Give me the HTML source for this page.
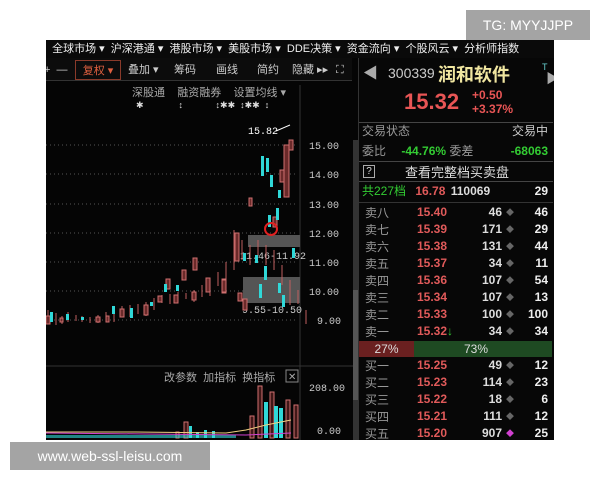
<!DOCTYPE html>
<html><head><meta charset="utf-8"><style>
*{margin:0;padding:0;box-sizing:border-box}
body{width:600px;height:480px;background:#fff;position:relative;overflow:hidden;font-family:"Liberation Sans","Noto Sans CJK SC",sans-serif}
.a{position:absolute;white-space:nowrap}
#scr{position:absolute;left:46px;top:40px;width:508px;height:400px;background:#050505;overflow:hidden}
.nav{left:0;top:0;width:508px;height:18px;background:#0a0a0a;color:#eee;font-size:11px;line-height:18px}
.tb{color:#ccc;font-size:11px;line-height:20px;height:20px;top:20px}
.r{font-size:12px;line-height:17px;height:17px}
.lab{color:#999;left:6px;font-family:"Noto Sans CJK SC",sans-serif}
.pr{color:#e05a5a;left:58px;font-weight:bold}
.q1{color:#ddd;right:52px;font-weight:bold;text-align:right}
.dot{color:#666;right:40px;font-size:8px}
.q2{color:#eee;right:6px;font-weight:bold}
</style></head><body>
<div class="a" style="left:466px;top:10px;width:124px;height:30px;background:#a4a4a4;color:#fff;font-size:14px;line-height:30px;text-align:center">TG: MYYJJPP</div>
<div id="scr">
<div class="a nav">&nbsp;&nbsp;全球市场 ▾ &nbsp;沪深港通 ▾ &nbsp;港股市场 ▾ &nbsp;美股市场 ▾ &nbsp;DDE决策 ▾ &nbsp;资金流向 ▾ &nbsp;个股风云 ▾ &nbsp;分析师指数</div>
<div class="a" style="left:0;top:18px;width:306px;height:23px;background:#0c0c0c;border-bottom:1px solid #333"></div>
<div class="a tb" style="left:-2px">+ &nbsp;—</div>
<div class="a tb" style="left:29px;top:20px;width:46px;border:1px solid #8a3a2a;color:#e06040;text-align:center">复权 ▾</div>
<div class="a tb" style="left:82px">叠加 ▾</div>
<div class="a tb" style="left:128px">筹码</div>
<div class="a tb" style="left:170px">画线</div>
<div class="a tb" style="left:211px">简约</div>
<div class="a tb" style="left:246px">隐藏 ▸▸</div>
<div class="a tb" style="left:290px">⛶</div>
<div class="a" style="left:86px;top:44px;color:#aaa;font-size:11px">深股通 &nbsp;&nbsp; 融资融券 &nbsp;&nbsp; 设置均线 ▾</div>
<div class="a" style="left:90px;top:60px;color:#ddd;font-size:9px">✱ &nbsp;&nbsp;&nbsp;&nbsp;&nbsp;&nbsp;&nbsp;&nbsp;&nbsp;&nbsp;&nbsp;&nbsp;&nbsp;↕ &nbsp;&nbsp;&nbsp;&nbsp;&nbsp;&nbsp;&nbsp;&nbsp;&nbsp;&nbsp;&nbsp;&nbsp;↕✱✱ &nbsp;↕✱✱ &nbsp;↕</div>
<svg class="a" style="left:0;top:0" width="312" height="400">
<g stroke="#555" stroke-dasharray="1 3">
<line x1="0" y1="105" x2="252" y2="105"/><line x1="0" y1="134" x2="252" y2="134"/><line x1="0" y1="164" x2="252" y2="164"/><line x1="0" y1="193" x2="252" y2="193"/><line x1="0" y1="222" x2="252" y2="222"/><line x1="0" y1="251" x2="252" y2="251"/><line x1="0" y1="280" x2="252" y2="280"/>
</g>
<line x1="254" y1="45" x2="254" y2="400" stroke="#333"/>
<line x1="0" y1="326" x2="312" y2="326" stroke="#333"/>
<rect x="202" y="195" width="52" height="12" fill="#555"/>
<rect x="197" y="237" width="57" height="26" fill="#555"/>
<text x="202" y="94" fill="#fff" font-size="10" font-family="Liberation Mono">15.82</text>
<line x1="230" y1="91" x2="244" y2="85" stroke="#fff"/>
<text x="194" y="219" fill="#ccc" font-size="10" font-family="Liberation Mono">11.46-11.92</text>
<text x="196" y="273" fill="#ccc" font-size="10" font-family="Liberation Mono">9.55-10.50</text>
<g fill="none" stroke-width="1">
<path d="M2 270v14M10 273v12M16 276v8M22 272v10M30 275v6M36 276v6M44 277v6M52 275v8M60 272v10M68 268v14M76 266v10M84 265v12M92 264v10M100 262v14M108 258v12M116 255v8M124 254v10M132 252v8M140 253v6M148 250v12M156 245v12M164 240v16M172 232v14M180 222v20M188 190v40M196 200v20M204 205v20M212 200v16M220 205v20M228 210v20M236 225v20M244 240v25M252 250v14M260 270v14" stroke="#c06060"/>
</g>
<g fill="#6a2a2a" stroke="#d07070">
<rect x="0" y="276" width="4" height="8"/><rect x="14" y="278" width="3" height="4"/><rect x="50" y="277" width="4" height="5"/><rect x="60" y="276" width="3" height="6"/><rect x="74" y="269" width="4" height="8"/><rect x="98" y="265" width="4" height="10"/><rect x="112" y="256" width="4" height="6"/><rect x="128" y="255" width="4" height="8"/><rect x="146" y="252" width="4" height="8"/><rect x="160" y="238" width="4" height="14"/><rect x="176" y="239" width="4" height="14"/><rect x="189" y="193" width="4" height="28"/><rect x="192" y="253" width="4" height="8"/><rect x="197" y="259" width="4" height="11"/><rect x="227" y="177" width="4" height="10"/><rect x="234" y="130" width="4" height="12"/><rect x="238" y="105" width="5" height="52"/><rect x="243" y="100" width="4" height="10"/><rect x="203" y="158" width="3" height="8"/><rect x="176" y="240" width="4" height="12"/><rect x="136" y="230" width="4" height="10"/><rect x="120" y="239" width="4" height="10"/><rect x="147" y="218" width="4" height="12"/>
</g>
<g fill="#30d8d8">
<rect x="4" y="272" width="3" height="10"/><rect x="20" y="274" width="3" height="6"/><rect x="35" y="277" width="3" height="3"/><rect x="66" y="266" width="3" height="8"/><rect x="84" y="268" width="3" height="10"/><rect x="104" y="262" width="3" height="4"/><rect x="118" y="244" width="3" height="8"/><rect x="130" y="245" width="3" height="6"/><rect x="197" y="213" width="3" height="8"/><rect x="209" y="215" width="3" height="8"/><rect x="218" y="226" width="3" height="14"/><rect x="213" y="244" width="3" height="14"/><rect x="232" y="243" width="3" height="10"/><rect x="232" y="150" width="3" height="8"/><rect x="236" y="255" width="3" height="12"/><rect x="215" y="116" width="3" height="20"/><rect x="220" y="118" width="3" height="14"/><rect x="224" y="135" width="3" height="12"/><rect x="230" y="168" width="3" height="12"/><rect x="222" y="175" width="3" height="12"/><rect x="246" y="208" width="3" height="10"/>
</g>
<circle cx="225" cy="189" r="6" fill="none" stroke="#e02020" stroke-width="2"/>
<text x="118" y="341" fill="#aaa" font-size="11">改参数 &#160;加指标 &#160;换指标</text>
<rect x="240" y="330" width="12" height="12" fill="none" stroke="#888"/>
<text x="242" y="340" fill="#aaa" font-size="10">✕</text>
<g fill="#401818" stroke="#d07070">
<rect x="212" y="346" width="4" height="52"/><rect x="224" y="352" width="4" height="46"/><rect x="240" y="360" width="4" height="38"/><rect x="248" y="365" width="4" height="33"/><rect x="204" y="376" width="4" height="22"/><rect x="138" y="382" width="4" height="16"/><rect x="130" y="392" width="3" height="6"/>
</g>
<g fill="#30d8d8">
<rect x="143" y="386" width="3" height="12"/><rect x="150" y="392" width="3" height="6"/><rect x="158" y="390" width="3" height="8"/><rect x="166" y="391" width="3" height="7"/><rect x="218" y="362" width="4" height="36"/><rect x="228" y="366" width="4" height="32"/><rect x="233" y="368" width="4" height="30"/><rect x="0" y="395" width="190" height="3" opacity=".6"/>
</g>
<polyline points="0,392 90,392 180,393 200,390 220,385 245,380" fill="none" stroke="#f0d080"/>
<polyline points="0,393 100,394 200,395 245,393" fill="none" stroke="#d040d0"/>
<g fill="#ccc" font-size="10" font-family="Liberation Mono">
<text x="263" y="109">15.00</text><text x="263" y="138">14.00</text><text x="263" y="168">13.00</text><text x="263" y="197">12.00</text><text x="263" y="226">11.00</text><text x="263" y="255">10.00</text><text x="271" y="284">9.00</text><text x="263" y="351">208.00</text><text x="271" y="394">0.00</text>
</g>
<rect x="307" y="100" width="5" height="300" fill="#333"/>
<rect x="307" y="250" width="5" height="110" fill="#555"/>
</svg>
<div class="a" style="left:312px;top:18px;width:196px;height:382px;background:#070707;border-left:1px solid #333"></div>
<div class="a" style="left:317px;top:22px;color:#aaa;font-size:15px">◀</div>
<div class="a" style="left:342px;top:25px;color:#ccc;font-size:14px">300339</div>
<div class="a" style="left:392px;top:21px;color:#f0e6a0;font-size:18px;font-weight:bold;font-family:'Noto Sans CJK SC',sans-serif">润和软件</div>
<div class="a" style="left:496px;top:22px;color:#6cc;font-size:9px">T</div>
<div class="a" style="left:500px;top:28px;color:#aaa;font-size:13px">▶</div>
<div class="a" style="left:358px;top:49px;color:#e85555;font-size:22px;font-weight:bold">15.32</div>
<div class="a" style="left:426px;top:48px;color:#e85555;font-size:12px;font-weight:bold;line-height:14px">+0.50<br>+3.37%</div>
<div class="a" style="left:313px;top:82px;width:194px;height:1px;background:#444"></div>
<div class="a r" style="left:316px;top:83px;color:#999;width:188px">交易状态<span style="position:absolute;right:2px;color:#ccc">交易中</span></div>
<div class="a r" style="left:316px;top:103px;color:#999;width:188px">委比 <span style="color:#3c3;font-weight:bold;margin-left:12px">-44.76%</span> 委差<span style="position:absolute;right:2px;color:#3c3;font-weight:bold">-68063</span></div>
<div class="a" style="left:313px;top:121px;width:194px;height:1px;background:#444"></div>
<div class="a" style="left:317px;top:125px;width:12px;height:13px;border:1px solid #aaa;color:#ddd;font-size:10px;line-height:11px;text-align:center">?</div>
<div class="a" style="left:359px;top:122px;color:#ddd;font-size:13px">查看完整档买卖盘</div>
<div class="a" style="left:313px;top:141px;width:194px;height:1px;background:#444"></div>
<div class="a r" style="left:316px;top:143px;width:188px;color:#3c3">共227档 <span style="color:#e05a5a;font-weight:bold;margin-left:6px">16.78</span> <span style="color:#ddd;font-weight:bold;margin-left:2px">110069</span><span style="position:absolute;right:2px;color:#eee;font-weight:bold">29</span></div>
<div class="a" style="left:313px;top:162px;width:194px;height:1px;background:#333"></div>
<div class="a" style="left:313px;top:164px;width:195px;height:236px">
<div class="a r lab" style="top:0">卖八</div><div class="a r pr" style="top:0">15.40</div><div class="a r q1" style="top:0">46</div><div class="a r dot" style="top:0">◆</div><div class="a r q2" style="top:0">46</div>
<div class="a r lab" style="top:17px">卖七</div><div class="a r pr" style="top:17px">15.39</div><div class="a r q1" style="top:17px">171</div><div class="a r dot" style="top:17px">◆</div><div class="a r q2" style="top:17px">29</div>
<div class="a r lab" style="top:34px">卖六</div><div class="a r pr" style="top:34px">15.38</div><div class="a r q1" style="top:34px">131</div><div class="a r dot" style="top:34px">◆</div><div class="a r q2" style="top:34px">44</div>
<div class="a r lab" style="top:51px">卖五</div><div class="a r pr" style="top:51px">15.37</div><div class="a r q1" style="top:51px">34</div><div class="a r dot" style="top:51px">◆</div><div class="a r q2" style="top:51px">11</div>
<div class="a r lab" style="top:68px">卖四</div><div class="a r pr" style="top:68px">15.36</div><div class="a r q1" style="top:68px">107</div><div class="a r dot" style="top:68px">◆</div><div class="a r q2" style="top:68px">54</div>
<div class="a r lab" style="top:85px">卖三</div><div class="a r pr" style="top:85px">15.34</div><div class="a r q1" style="top:85px">107</div><div class="a r dot" style="top:85px">◆</div><div class="a r q2" style="top:85px">13</div>
<div class="a r lab" style="top:102px">卖二</div><div class="a r pr" style="top:102px">15.33</div><div class="a r q1" style="top:102px">100</div><div class="a r dot" style="top:102px">◆</div><div class="a r q2" style="top:102px">100</div>
<div class="a r lab" style="top:119px">卖一</div><div class="a r pr" style="top:119px">15.32<span style="color:#3c3">↓</span></div><div class="a r q1" style="top:119px">34</div><div class="a r dot" style="top:119px">◆</div><div class="a r q2" style="top:119px">34</div>
<div class="a" style="left:0;top:137px;width:55px;height:16px;background:#6a2020;color:#ddd;font-size:12px;line-height:16px;text-align:center">27%</div>
<div class="a" style="left:55px;top:137px;width:138px;height:16px;background:#1e4a22;color:#ddd;font-size:12px;line-height:16px;padding-left:50px">73%</div>
<div class="a r lab" style="top:153px">买一</div><div class="a r pr" style="top:153px">15.25</div><div class="a r q1" style="top:153px">49</div><div class="a r dot" style="top:153px">◆</div><div class="a r q2" style="top:153px">12</div>
<div class="a r lab" style="top:170px">买二</div><div class="a r pr" style="top:170px">15.23</div><div class="a r q1" style="top:170px">114</div><div class="a r dot" style="top:170px">◆</div><div class="a r q2" style="top:170px">23</div>
<div class="a r lab" style="top:187px">买三</div><div class="a r pr" style="top:187px">15.22</div><div class="a r q1" style="top:187px">18</div><div class="a r dot" style="top:187px">◆</div><div class="a r q2" style="top:187px">6</div>
<div class="a r lab" style="top:204px">买四</div><div class="a r pr" style="top:204px">15.21</div><div class="a r q1" style="top:204px">111</div><div class="a r dot" style="top:204px">◆</div><div class="a r q2" style="top:204px">12</div>
<div class="a r lab" style="top:221px">买五</div><div class="a r pr" style="top:221px">15.20</div><div class="a r q1" style="top:221px">907</div><div class="a r dot" style="top:221px;color:#d040d0">◆</div><div class="a r q2" style="top:221px">25</div>
</div>
</div>
<div class="a" style="left:10px;top:442px;width:200px;height:28px;background:#a4a4a4;color:#fff;font-size:14px;line-height:28px;text-align:center">www.web-ssl-leisu.com</div>
</body></html>
